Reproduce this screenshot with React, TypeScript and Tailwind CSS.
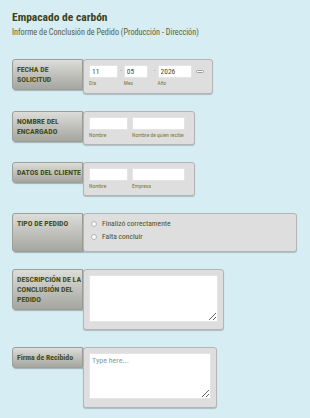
import type { ReactNode } from "react";

const font = "font-['Liberation_Sans_Narrow','Roboto_Condensed','Roboto',sans-serif]";

function Label({ children, className = "" }: { children: ReactNode; className?: string }) {
  return (
    <div
      className={`w-[71px] shrink-0 rounded-l-[3px] border border-[#9d9d99] bg-gradient-to-b from-[#dcdcd8] to-[#a6a6a1] pl-[4px] pt-[5px] pb-[4px] text-[7.8px] font-bold leading-[10px] text-[#444c18] shadow-[1px_1px_1px_rgba(0,0,0,0.25)] ${className}`}
    >
      {children}
    </div>
  );
}

function Panel({ children, className = "" }: { children: ReactNode; className?: string }) {
  return (
    <div
      className={`rounded-[3px] border border-[#b4b4b4] bg-[#dedede] shadow-[0_1px_1px_rgba(0,0,0,0.2)] ${className}`}
    >
      {children}
    </div>
  );
}

function Field({ width, value, note }: { width: string; value?: string; note: string }) {
  return (
    <div className="flex flex-col">
      <input
        readOnly
        value={value ?? ""}
        className={`${width} h-[13px] border border-[#e4e4e4] bg-white px-[2px] text-[7.5px] text-[#4a4a2a] outline-none`}
      />
      <span className="mt-[2px] text-[5.5px] leading-[7px] text-[#7d7a3c]">{note}</span>
    </div>
  );
}

function Dash() {
  return <span className="mt-[2px] px-[2px] text-[7px] leading-[8px] text-[#9a9a9a]">-</span>;
}

function Radio({ text }: { text: string }) {
  return (
    <label className="flex h-[13px] items-center gap-[5px]">
      <span className="h-[6px] w-[6px] rounded-full border border-[#b5b5b5] bg-white" />
      <span className="text-[7.6px] text-[#4d4f22]">{text}</span>
    </label>
  );
}

export default function App() {
  return (
    <div className={`min-h-[418px] bg-[#d5edf3] px-3 pt-[11px] ${font}`}>
      <h1 className="text-[11.5px] font-bold leading-[13px] text-[#3f421c]">Empacado de carbón</h1>
      <p className="mt-[2px] text-[8.2px] leading-[12px] text-[#5f5d2e]">
        Informe de Conclusión de Pedido (Producción - Dirección)
      </p>

      <div className="mt-[21px] flex flex-col gap-[17px]">
        <div className="flex items-start">
          <Label>FECHA DE SOLICITUD</Label>
          <Panel className="flex items-start pl-[5px] pr-[8px] pt-[5px] pb-[6px]">
            <Field width="w-[29px]" value="11" note="Día" />
            <Dash />
            <Field width="w-[24px]" value="05" note="Mes" />
            <span className="w-[4px]" />
            <Dash />
            <Field width="w-[34px]" value="2026" note="Año" />
            <span className="ml-[4px] mt-[5px] h-[3px] w-[8px] rounded-full border border-[#9d9d9d] bg-white" />
          </Panel>
        </div>

        <div className="flex items-start">
          <Label>NOMBRE DEL ENCARGADO</Label>
          <Panel className="flex items-start gap-[4px] pl-[5px] pr-[9px] pt-[5px] pb-[5px]">
            <Field width="w-[39px]" note="Nombre" />
            <Field width="w-[53px]" note="Nombre de quien recibe" />
          </Panel>
        </div>

        <div className="flex items-start">
          <Label>DATOS DEL CLIENTE</Label>
          <Panel className="flex items-start gap-[4px] pl-[5px] pr-[9px] pt-[5px] pb-[5px]">
            <Field width="w-[39px]" note="Nombre" />
            <Field width="w-[53px]" note="Empresa" />
          </Panel>
        </div>

        <div className="flex items-stretch">
          <Label>TIPO DE PEDIDO</Label>
          <Panel className="w-[214px] pl-[7px] pt-[3px] pb-[8px]">
            <Radio text="Finalizó correctamente" />
            <Radio text="Falta concluir" />
          </Panel>
        </div>

        <div className="flex items-start">
          <Label>DESCRIPCIÓN DE LA CONCLUSIÓN DEL PEDIDO</Label>
          <Panel className="pl-[5px] pr-[5px] pt-[5px] pb-[7px]">
            <textarea className="block h-[47px] w-[129px] resize border border-[#e4e4e4] bg-white outline-none" />
          </Panel>
        </div>

        <div className="flex items-start">
          <Label>Firma de Recibido</Label>
          <Panel className="pl-[5px] pr-[5px] pt-[5px] pb-[8px]">
            <textarea
              placeholder="Type here..."
              className="block h-[46px] w-[122px] resize border border-[#e4e4e4] bg-white px-[2px] pt-[1px] text-[8px] text-[#444] outline-none placeholder:text-[#8a9a9a]"
            />
          </Panel>
        </div>
      </div>
    </div>
  );
}
